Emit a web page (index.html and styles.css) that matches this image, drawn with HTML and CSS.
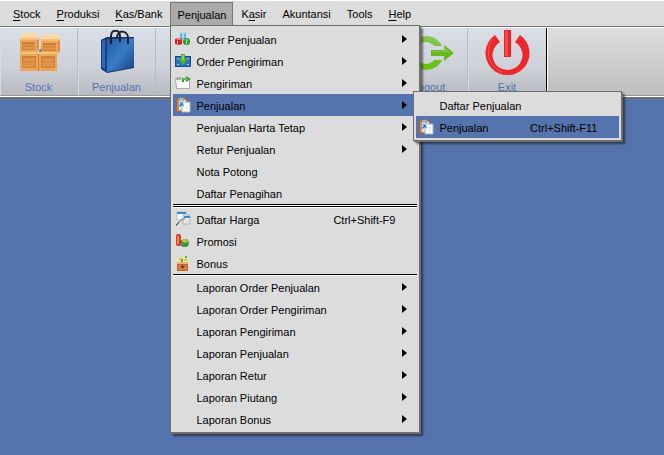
FILE: index.html
```html
<!DOCTYPE html>
<html lang="id">
<head>
<meta charset="utf-8">
<title>Penjualan</title>
<link rel="stylesheet" href="styles.css">
</head>
<body>
<nav class="menubar">
  <button class="menu-title"><u>S</u>tock</button>
  <button class="menu-title"><u>P</u>roduksi</button>
  <button class="menu-title"><u>K</u>as/Bank</button>
  <div class="menu-holder">
    <button class="menu-title open">Pen<u>j</u>ualan</button>
    <div class="popup main-popup">
      <button class="item"><svg class="icon" viewBox="0 0 16 16"><path d="M5 2l3-1 3 1v6H5z" fill="#62b4e8"/><path d="M5 2l3 1 3-1-3-1z" fill="#b5e1f8"/><path d="M7.500 3h1v4h-1z" fill="#e6f6ff"/><path d="M0 8l3-1 4 1v5l-3 1-4-1z" fill="#d51f20"/><path d="M0 8l4 1 3-1-4-1z" fill="#f78b80"/><path d="M2 10h1v3H2z" fill="#fbb"/><circle cx="11.500" cy="10.500" r="3.500" fill="#299637"/><path d="M9 9l2-1 3 1-2 1z" fill="#7fcf7c"/><path d="M11 10h1v3h-1z" fill="#bce8b8"/></svg><span class="label">Order Penjualan</span><span class="arrow"></span></button>
      <button class="item"><svg class="icon" viewBox="0 0 16 16"><path d="M0 3h16v11H0z" fill="#15518f"/><path d="M1 4h14v9H1z" fill="#2476b9"/><path d="M2 5h2v1H2zM12 5h2v1h-2zM2 11h2v1H2zM12 11h2v1h-2z" fill="#8acbed"/><path d="M6 1h4v5h3l-5 6-5-6h3z" fill="#55ad31"/><path d="M7 2h2v5H7z" fill="#8fd065"/></svg><span class="label">Order Pengiriman</span><span class="arrow"></span></button>
      <button class="item"><svg class="icon" viewBox="0 0 16 16"><path d="M0 4l2-2h4l1 2h8v10H1z" fill="#a9aea6"/><path d="M1 5h4l1-1h8v9H2z" fill="#f1f2ee"/><path d="M3 7h11v6H3z" fill="#fff"/><path d="M7 7V3h4V1l5 3-5 3V5H9v2z" fill="#3e962b"/><path d="M8 4h5" stroke="#9ad47a"/></svg><span class="label">Pengiriman</span><span class="arrow"></span></button>
      <button class="item selected"><svg class="icon" viewBox="0 0 16 16"><path d="M1 1h11v14H1z" fill="#a66232"/><path d="M2 2h9v12H2z" fill="#c88954"/><path d="M4 3h7v10H4z" fill="#d9e6ef"/><path d="M4 1h5v2H4z" fill="#ddd" stroke="#8c8c8c"/><path d="M7 5h8v10H7z" fill="#fafcfd" stroke="#a8b4be"/><path d="M4 5l4 1 1 4-2-2-2 2-1-2 2-1z" fill="#287dc3"/><path d="M10 9h3M10 11h3" stroke="#d4dce3"/></svg><span class="label">Penjualan</span><span class="arrow"></span></button>
      <button class="item"><span class="icon"></span><span class="label">Penjualan Harta Tetap</span><span class="arrow"></span></button>
      <button class="item"><span class="icon"></span><span class="label">Retur Penjualan</span><span class="arrow"></span></button>
      <button class="item"><span class="icon"></span><span class="label">Nota Potong</span></button>
      <button class="item"><span class="icon"></span><span class="label">Daftar Penagihan</span></button>
      <div class="rule"></div><div class="rule"></div>
      <button class="item"><svg class="icon" viewBox="0 0 16 16"><path d="M2 1h9v8H2z" fill="#fff" stroke="#b5bdc4"/><path d="M2 1h9v2H2z" fill="#2e8dcf"/><path d="M8 4h7v9H8z" fill="#eff3f6" stroke="#a5afb8"/><path d="M9 5h6v2H9z" fill="#2e8dcf"/><path d="M10 9h4M10 11h4" stroke="#c7d0d8"/><path d="M1 15l6-7h3" fill="none" stroke="#78828a"/><path d="M1 14l3-3" stroke="#465462"/></svg><span class="label">Daftar Harga</span><span class="shortcut">Ctrl+Shift-F9</span></button>
      <button class="item"><svg class="icon" viewBox="0 0 16 16"><rect x="1" y="1" width="5" height="12" rx="2" fill="#d83c20"/><path d="M2 3h2v8H2z" fill="#f28b62"/><path d="M5 7l5 2v5l-4-1z" fill="#b92c1c"/><circle cx="10" cy="10" r="4" fill="#409b35"/><path d="M10 10V6a4 4 0 0 1 4 3z" fill="#91c94d"/><path d="M10 10l-3-2a4 4 0 0 1 3-2z" fill="#e8bd42"/><path d="M10 10l3 2-2 1z" fill="#376cad"/></svg><span class="label">Promosi</span></button>
      <button class="item"><svg class="icon" viewBox="0 0 16 16"><path d="M2 5l3-4 2 1 2-2 4 4v3H2z" fill="#e4e8b8"/><path d="M4 3h3v2H4zM9 4h3v2H9z" fill="#e6bf34"/><path d="M6 4h2v3H6zM10 1h2v2h-2z" fill="#62a94b"/><path d="M2 7h11v9H2z" fill="#b76530"/><path d="M2 7h11v2H2z" fill="#eab277"/><path d="M3 10h9v5H3z" fill="#d38344"/><path d="M5 11h2v-1h1v1h2l-2 3z" fill="#9e2e1d"/></svg><span class="label">Bonus</span></button>
      <div class="rule"></div>
      <button class="item"><span class="icon"></span><span class="label">Laporan Order Penjualan</span><span class="arrow"></span></button>
      <button class="item"><span class="icon"></span><span class="label">Laporan Order Pengiriman</span><span class="arrow"></span></button>
      <button class="item"><span class="icon"></span><span class="label">Laporan Pengiriman</span><span class="arrow"></span></button>
      <button class="item"><span class="icon"></span><span class="label">Laporan Penjualan</span><span class="arrow"></span></button>
      <button class="item"><span class="icon"></span><span class="label">Laporan Retur</span><span class="arrow"></span></button>
      <button class="item"><span class="icon"></span><span class="label">Laporan Piutang</span><span class="arrow"></span></button>
      <button class="item"><span class="icon"></span><span class="label">Laporan Bonus</span><span class="arrow"></span></button>
      <div class="popup sub-popup">
        <button class="item"><span class="icon"></span><span class="label">Daftar Penjualan</span></button>
        <button class="item selected"><svg class="icon" viewBox="0 0 16 16"><path d="M1 1h11v14H1z" fill="#a66232"/><path d="M2 2h9v12H2z" fill="#c88954"/><path d="M4 3h7v10H4z" fill="#d9e6ef"/><path d="M4 1h5v2H4z" fill="#ddd" stroke="#8c8c8c"/><path d="M7 5h8v10H7z" fill="#fafcfd" stroke="#a8b4be"/><path d="M4 5l4 1 1 4-2-2-2 2-1-2 2-1z" fill="#287dc3"/><path d="M10 9h3M10 11h3" stroke="#d4dce3"/></svg><span class="label">Penjualan</span><span class="shortcut">Ctrl+Shift-F11</span></button>
      </div>
    </div>
  </div>
  <button class="menu-title">K<u>a</u>sir</button>
  <button class="menu-title">Akuntansi</button>
  <button class="menu-title">Tools</button>
  <button class="menu-title"><u>H</u>elp</button>
</nav>
<div class="toolbar">
  <button class="tool">
    <svg class="tool-icon" viewBox="0 0 48 46">
      <g id="crate"><path d="M5 8l3-5h14l2 5-2 3H5z" fill="#fbd9a4"/><path d="M5 8h17v2H5z" fill="#f5bd76"/><path d="M5 10h17v12H5z" fill="#eba65a"/><path d="M7 12h13v8H7z" fill="#cf8038"/><path d="M8 14h12v5H8z" fill="#df9448"/><path d="M8 16h12" stroke="#d08239"/><path d="M22 10l2-2v11l-2 3z" fill="#d98f49"/></g>
      <use href="#crate" x="21" y="1"/>
      <path d="M24 20l3-2v4h-3z" fill="#798b8a"/>
      <path d="M5 22h40l-3 3v16H5z" fill="#eba65a"/><path d="M5 22h38v2H5z" fill="#f7c47f"/><path d="M7 26h14v12H7zM26 26h14v12H26z" fill="#cf8038"/><path d="M8 28h12v9H8zM27 28h12v9H27z" fill="#df9448"/><path d="M8 32h12M27 32h12" stroke="#d08239"/><path d="M23 24h1v17h-1z" fill="#c97f3c"/>
    </svg>
    <span>Stock</span>
  </button>
  <button class="tool">
    <svg class="tool-icon" viewBox="0 0 48 46">
      <defs><linearGradient id="bag" x2="1" y2="1"><stop stop-color="#2357a2"/><stop offset=".5" stop-color="#397bc8"/><stop offset="1" stop-color="#193f86"/></linearGradient></defs>
      <path d="M8 10l6-3h27v31l-27 5-6-4z" fill="#14336c"/><path d="M14 9l27-1v29l-27 5z" fill="url(#bag)"/><path d="M8 10l6-1v33l-6-4z" fill="#17427f"/><path d="M9 11l3-1v29l-3-2z" fill="#2f68ad"/>
      <path d="M18 13V6c0-7 9-7 9 0v6" fill="none" stroke="#1b202b" stroke-width="2"/><path d="M24 8c0-9 11-8 11 0v5" fill="none" stroke="#1b202b" stroke-width="2"/><circle cx="18" cy="13" r="1" fill="#0e1830"/><circle cx="35" cy="13" r="1" fill="#0e1830"/>
    </svg>
    <span>Penjualan</span>
  </button>
  <div class="tool-space"></div>
  <button class="tool">
    <svg class="tool-icon" viewBox="0 0 48 46">
      <defs><linearGradient id="go" x2="0" y2="1"><stop stop-color="#8ac65c"/><stop offset=".6" stop-color="#67bd16"/><stop offset="1" stop-color="#6dc41a"/></linearGradient></defs>
      <path d="M37 16A17 17 0 1 0 37 30h-8a11 11 0 1 1 0-14z" fill="url(#go)"/><path d="M26 20h13v-5l10 8-10 8v-5H26z" fill="#65b91c"/><path d="M27 21h12v-4l6 5H27z" fill="#80c64b"/>
    </svg>
    <span>Logout</span>
  </button>
  <button class="tool last">
    <svg class="tool-icon" viewBox="0 0 48 46">
      <path d="M12 5l5 7a15 15 0 1 0 15 0l5-7a22 22 0 1 1-25 0z" fill="#ef2629"/><path d="M10 9a21 21 0 0 0 9 33" fill="none" stroke="#f65453"/><path d="M21 0h7v27h-7z" fill="#ed2226"/><path d="M22 1h3v25h-3z" fill="#ff4849"/>
    </svg>
    <span>Exit</span>
  </button>
  <div class="tool-end"></div>
</div>
</body>
</html>
```
FILE: styles.css
```css
* { box-sizing: border-box; }

body {
  margin: 0;
  min-height: 100vh;
  background: #5573ac;
  font-family: "Liberation Sans", Arial, sans-serif;
  font-size: 11px;
  line-height: 14px;
  color: #000;
}

button {
  margin: 0;
  padding: 0;
  border: 0;
  background: none;
  font: inherit;
  color: inherit;
}

.menubar {
  display: flex;
  height: 28px;
  padding: 1px 0 0 5px;
  background: #dcdcdc;
  border-top: 1px solid #fff;
  border-bottom: 1px solid #fff;
  box-shadow: inset 0 -1px #777;
}

.menu-title {
  display: block;
  height: 24px;
  padding: 0 8px;
}

u { text-underline-offset: 2px; }

.menu-title.open {
  background: #aaa;
  border: 1px solid #777;
  border-bottom: 0;
  padding: 0 6px;
}

.menu-holder { position: relative; }

.popup {
  position: absolute;
  z-index: 1;
  padding: 2px;
  background: #dcdcdc;
  border: 1px solid #6e6e6e;
  box-shadow: 1px 1px #707070, 3px 3px 2px #00000080;
}

.main-popup {
  top: 23px;
  left: 0;
  width: 250px;
}

.sub-popup {
  top: 65px;
  left: 242px;
  width: 209px;
}

.item {
  display: flex;
  align-items: center;
  width: 100%;
  height: 22px;
  padding: 0 10px 0 2px;
  text-align: left;
}

.item.selected { background: #5573ac; }

.icon {
  width: 16px;
  height: 16px;
  margin-right: 5px;
  flex: none;
}

.label {
  flex: 1;
  white-space: nowrap;
  padding-top: 2px;
}

.shortcut {
  padding: 2px 12px 0 0;
}

.arrow {
  border: 4px solid transparent;
  border-left: 5px solid #000;
  border-right: 0;
}

.rule {
  height: 2px;
  background: #000;
  border-bottom: 1px solid #fff;
}

.toolbar {
  display: flex;
  height: 71px;
  background: linear-gradient(#dedede, #bdbdbd);
  border-bottom: 2px solid #707070;
  box-shadow: inset 0 -1px #fff, inset 0 -2px #999;
}

.tool {
  display: flex;
  flex-direction: column;
  align-items: center;
  flex: none;
  width: 78px;
  height: 67px;
  padding-top: 2px;
  color: #5573b3;
  background: linear-gradient(#dadee7, #cdd0d8 60%, #b8bac0);
  border-right: 1px solid #b8bbc3;
  box-shadow: inset 1px 0 #d8dbe1;
}

.tool-icon {
  width: 48px;
  height: 46px;
  margin-bottom: 4px;
}

.tool-space {
  flex: none;
  width: 234px;
  height: 67px;
  background: linear-gradient(#dadee7, #cdd0d8 60%, #b8bac0);
}

.tool.last {
  border-right: 0;
  border-radius: 0 8px 8px 0;
}

.tool-end {
  width: 2px;
  height: 68px;
  background: #000;
  border-right: 1px solid #fff;
}
```
